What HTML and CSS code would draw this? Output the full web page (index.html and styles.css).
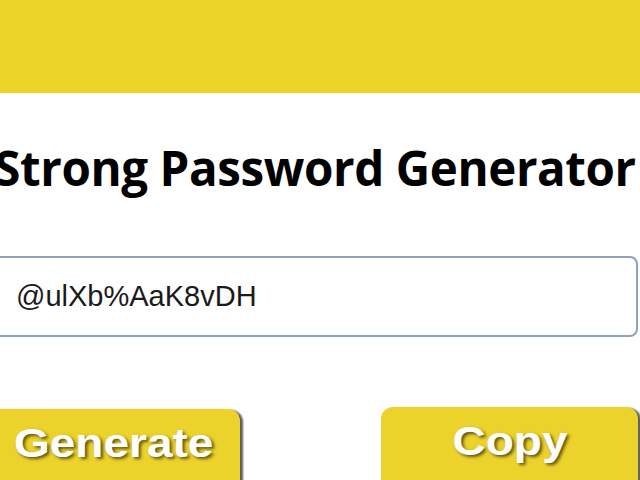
FILE: index.html
```html
<!DOCTYPE html>
<html>
<head>
<meta charset="utf-8">
<link rel="stylesheet" href="styles.css">
</head>
<body>
<div class="page">
  <div class="topbar"></div>
  <h1 class="title">Strong Password Generator</h1>
  <div class="field"><span class="pw">@ulXb%AaK8vDH</span></div>
  <div class="actions">
    <button class="btn btn-generate"><span class="label">Generate</span></button>
    <button class="btn btn-copy"><span class="label">Copy</span></button>
  </div>
</div>
</body>
</html>
```
FILE: styles.css
```css
html, body {
  margin: 0;
  padding: 0;
  background: #ffffff;
}
.page {
  width: 640px;
  height: 480px;
  overflow: hidden;
  display: flex;
  flex-direction: column;
}
.topbar {
  height: 93px;
  background: #ecd328;
  flex: none;
}
.title {
  margin: 47px -20px 0 -30px;
  font-family: "Open Sans", "Noto Sans", sans-serif;
  font-weight: 700;
  font-size: 47.5px;
  line-height: 56px;
  text-align: center;
  color: #000;
  white-space: nowrap;
  letter-spacing: -0.4px;
  flex: none;
}
.field {
  margin: 60px 2px 0 -12px;
  height: 77px;
  border: 2px solid #8ea3bb;
  border-radius: 8px;
  display: flex;
  align-items: center;
  padding-left: 26px;
  flex: none;
}
.pw {
  font-family: "Liberation Sans", Arial, sans-serif;
  font-size: 29px;
  color: #1a1a1a;
}
.actions {
  display: flex;
  justify-content: space-between;
  margin: 70px 2px 0 -12px;
  flex: none;
}
.btn {
  height: 100px;
  border: none;
  background: #ecd32b;
  border-radius: 12px;
  box-shadow: 3px 1px 2px rgba(40, 40, 40, 0.75);
  font-family: "Liberation Sans", Arial, sans-serif;
  font-weight: 700;
  font-size: 40px;
  color: #ffffff;
  text-shadow: 2px 2px 3px rgba(0, 0, 0, 0.6);
  display: flex;
  align-items: flex-start;
  justify-content: center;
  padding: 12px 0 0 0;
}
.btn-generate {
  width: 252px;
  margin-top: 2px;
}
.btn-copy {
  width: 257px;
}
.label {
  display: inline-block;
  transform: scaleX(1.15);
}
```
